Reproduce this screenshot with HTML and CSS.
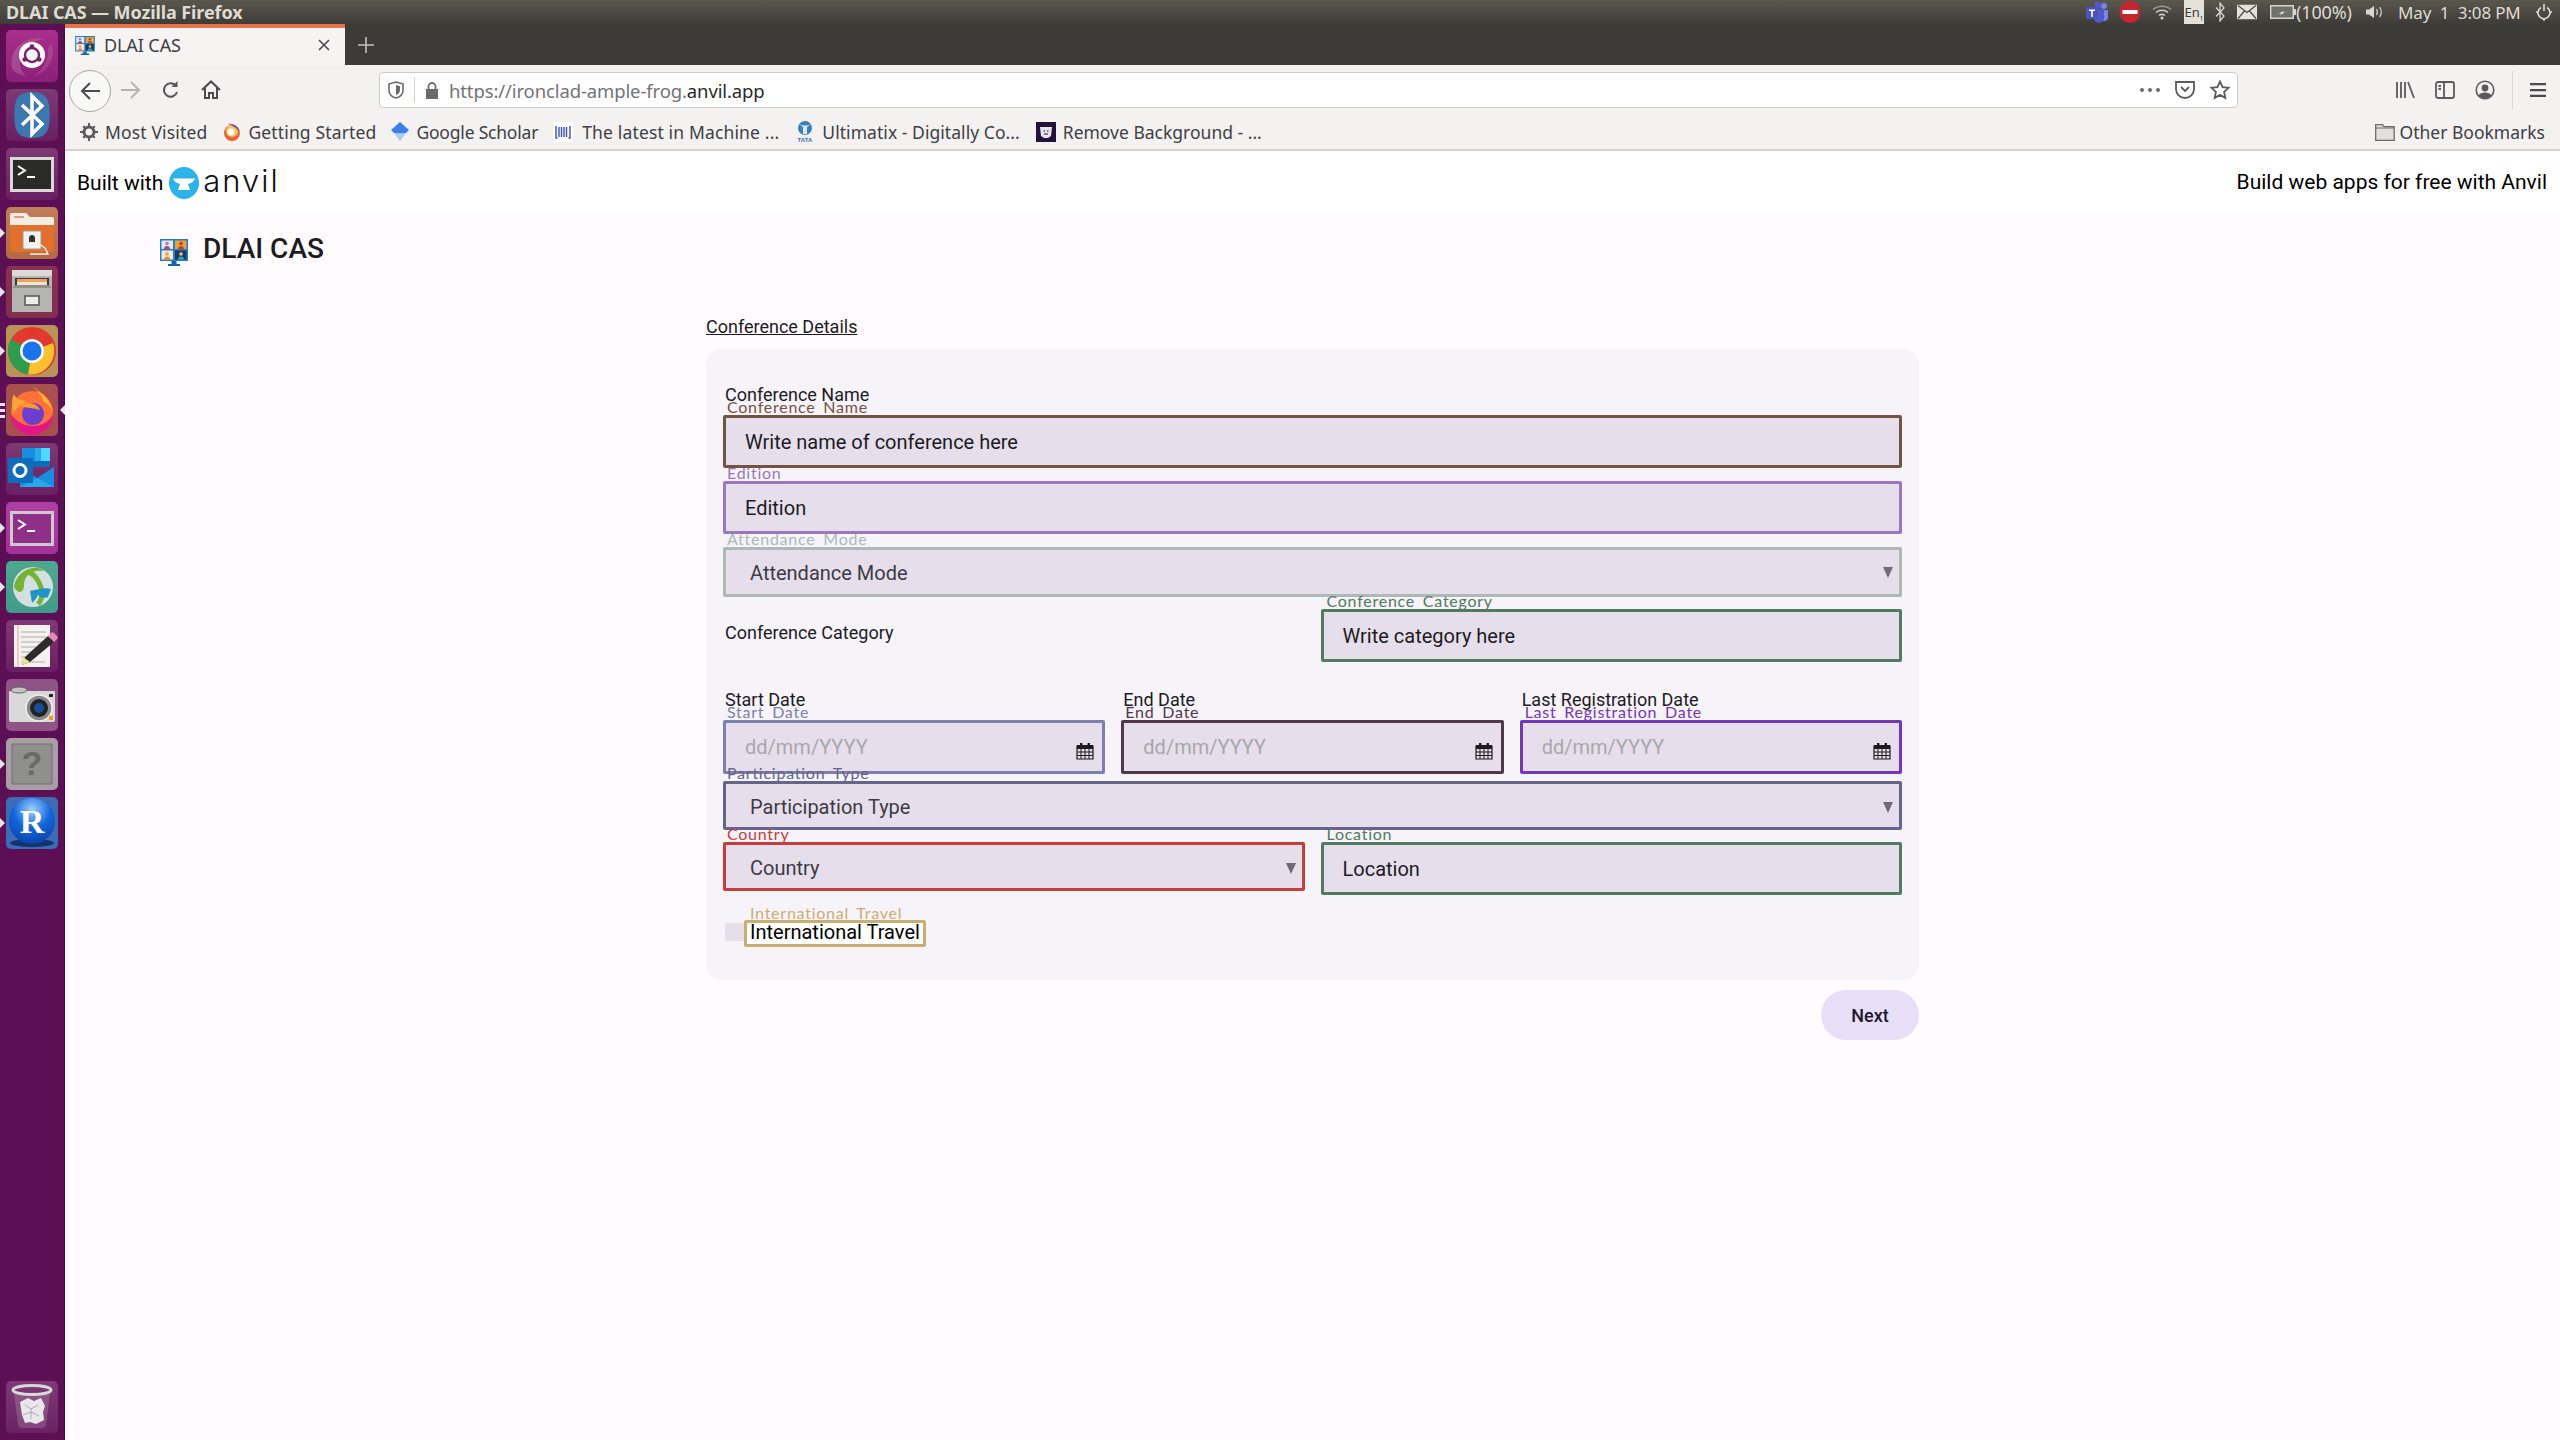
FILE: index.html
```html
<!DOCTYPE html>
<html lang="en">
<head>
<meta charset="utf-8">
<title>DLAI CAS — Mozilla Firefox</title>
<link rel="stylesheet" href="styles.css">
</head>
<body>
<svg class="sprite" width="0" height="0">
  <defs>
    <symbol id="cal" viewBox="0 0 18 18">
      <path d="M1 4h16v13H1z" fill="#e6dfeb" stroke="#1c1b1f" stroke-width="1.2"/>
      <path d="M1 3h16v4H1z" fill="#1c1b1f"/>
      <path d="M4 1h2.4v4H4zM11.6 1H14v4h-2.4z" fill="#1c1b1f"/>
      <path d="M1 10h16M1 13.5h16M5 7v10M9 7v10M13 7v10" stroke="#1c1b1f" stroke-width="1"/>
    </symbol>
    <symbol id="logo" viewBox="0 0 28 27">
      <path d="M0 0h28v22H0z" fill="#1f7fd1"/>
      <path d="M1.5 1.5h11.5v8.5H1.5z" fill="#dbeefb"/>
      <path d="M15 1.5h11.5v8.5H15z" fill="#f0a030"/>
      <path d="M1.5 11.5h11.5v9H1.5z" fill="#fbe8d0"/>
      <path d="M15 11.5h11.5v9H15z" fill="#1d3a5c"/>
      <circle cx="7" cy="4.5" r="1.8" fill="#e0688a"/><path d="M4 10c0-4 6-4 6 0z" fill="#c33a6a"/>
      <circle cx="21" cy="4.5" r="1.8" fill="#b8431f"/><path d="M18 10c0-4 6-4 6 0z" fill="#c4451c"/>
      <circle cx="7" cy="15" r="1.8" fill="#ef9a4a"/><path d="M4 20.5c0-4 6-4 6 0z" fill="#ef7f2a"/>
      <circle cx="21" cy="15" r="1.8" fill="#f0c090"/><path d="M18 20.5c0-4 6-4 6 0z" fill="#2bb3a0"/>
      <path d="M11.500 22h5v3h-5zM8 25h12v2H8z" fill="#1565a8"/>
    </symbol>
    <symbol id="arrow" viewBox="0 0 10 12"><path d="M0 1h10L5 12z" fill="#6f6b74"/></symbol>
  </defs>
</svg>

<header class="panel">
  <span class="panel-title">DLAI CAS — Mozilla Firefox</span>
  <div class="tray">
    <svg class="t-teams" width="24" height="22" viewBox="0 0 24 22"><circle cx="19" cy="5" r="3" fill="#7b83eb"/><circle cx="13" cy="4" r="3.500" fill="#5059c9"/><path d="M14 9h9v7a4 4 0 0 1-4 4h-1a4 4 0 0 1-4-4z" fill="#7b83eb"/><path d="M9 8h10v9a5 5 0 0 1-5 5 5 5 0 0 1-5-5z" fill="#5059c9"/><path d="M1 6h12v12H1z" fill="#4b53bc"/><path d="M4 8.500h6v1.600H7.800V16H6.200v-5.900H4z" fill="#fff"/></svg>
    <svg class="t-red" width="22" height="23" viewBox="0 0 22 23"><ellipse cx="11" cy="11.500" rx="10.500" ry="11" fill="#c6262e"/><path d="M3.500 9.500h15v4H3.500z" fill="#fff"/></svg>
    <svg class="t-wifi" width="20" height="16" viewBox="0 0 20 16" fill="none" stroke="#cfcdc6" stroke-width="1.500"><path d="M1 5.500c5-4.500 13-4.500 18 0" opacity=".6"/><path d="M4 8.500c3.500-3 8.500-3 12 0"/><path d="M7 11.500c2-1.500 4-1.500 6 0"/><circle cx="10" cy="14" r=".8" fill="#cfcdc6"/></svg>
    <span class="t-en">En<sub>1</sub></span>
    <svg class="t-bt" width="10" height="20" viewBox="0 0 10 20" fill="none" stroke="#d8d6cf" stroke-width="1.300"><path d="M1 5.500l8 8.500-4 5V1l4 5-8 8.500"/></svg>
    <svg class="t-mail" width="20" height="15" viewBox="0 0 20 15"><path d="M0 0h20v15H0z" fill="#e3e1da"/><path d="M1 1l9 7 9-7M1 14l6.500-7.500M19 14l-6.500-7.500" fill="none" stroke="#4a4843" stroke-width="1.200"/></svg>
    <svg class="t-batt" width="26" height="14" viewBox="0 0 26 14"><path d="M.7.700h22.600v12.600H.7z" fill="#716f69" stroke="#d8d6cf" stroke-width="1.400"/><path d="M23.500 4H26v6h-2.500z" fill="#d8d6cf"/><path d="M7 9l7-3-1 2 5-2-8 4 1-2z" fill="#e8e6df"/></svg>
    <span class="t-pct">(100%)</span>
    <svg class="t-vol" width="20" height="16" viewBox="0 0 20 16"><path d="M1 5.500h3L9 2v12L4 10.500H1z" fill="#d8d6cf"/><path d="M11.500 5c1.200 2 1.200 4 0 6M14.500 3c2.200 3 2.200 7 0 10" fill="none" stroke="#d8d6cf" stroke-width="1.200"/></svg>
    <span class="t-date">May&nbsp; 1&nbsp; 3:08 PM</span>
    <svg class="t-pow" width="16" height="18" viewBox="0 0 16 18" fill="none" stroke="#dedcd5" stroke-width="1.600"><path d="M5 4.500a6 6 0 1 0 6 0M8 1v7"/><path d="M0 9h2M14 9h2M8 16v2" stroke-width="1.400"/></svg>
  </div>
</header>

<div class="desktop">
  <aside class="launcher">
    <div class="tile t-dash">
      <svg viewBox="0 0 52 52"><path d="M6 38C2 18 22 4 40 10c-14-2-26 8-26 22 0 6 2 10 6 14-6-1-12-3-14-8z" fill="#fff" opacity=".16"/><path d="M46 14c4 14-4 28-18 32 8-6 14-14 14-24 0-3 0-6 4-8z" fill="#fff" opacity=".12"/><circle cx="26" cy="25" r="13" fill="#fff"/><circle cx="26" cy="25" r="7" fill="none" stroke="#7d1f6a" stroke-width="2.400"/><circle cx="26" cy="16.500" r="2.300" fill="#7d1f6a"/><circle cx="18.700" cy="29.500" r="2.300" fill="#7d1f6a"/><circle cx="33.300" cy="29.500" r="2.300" fill="#7d1f6a"/></svg>
    </div>
    <div class="tile t-dim">
      <svg viewBox="0 0 52 52"><path d="M26 3c10 0 16 4 17 13 1 6 1 14 0 20-1 9-7 13-17 13S10 45 9 36c-1-6-1-14 0-20C10 7 16 3 26 3z" fill="#3a78ad"/><path d="M16 16l20 19-10 10V7l10 10-20 19" fill="none" stroke="#fff" stroke-width="3.500"/></svg>
    </div>
    <div class="tile t-dim">
      <svg viewBox="0 0 52 52"><path d="M4 9h44v35H4z" fill="#d8d8d4"/><path d="M7 12h38v29H7z" fill="#2a2a28"/><path d="M12 18l7 4.500-7 4.500" fill="none" stroke="#fff" stroke-width="2"/><path d="M21 28h8v2h-8z" fill="#fff"/></svg>
    </div>
    <div class="tile t-orange run">
      <svg viewBox="0 0 52 52"><path d="M4 8a2 2 0 0 1 2-2h14l4 4h22a2 2 0 0 1 2 2v6H4z" fill="#f1ece4"/><path d="M8 9h10v2H8z" fill="#e89a6a"/><path d="M4 18h44v24a3 3 0 0 1-3 3H7a3 3 0 0 1-3-3z" fill="#e2702c"/><path d="M17 24h18v18H17z" fill="#f5f4f0" stroke="#9a9a96"/><path d="M23 31c0-4 6-4 6 0v4h-6z" fill="#333"/><path d="M33 37l6 4 3 6-18 0" fill="none" stroke="#f0f0ec" stroke-width="1.500"/></svg>
    </div>
    <div class="tile t-wine run">
      <svg viewBox="0 0 52 52"><path d="M6 4h40v6l-4 2H10l-4-2z" fill="#d9d9d6"/><path d="M6 10h40v36H6z" fill="#b4b4b0"/><path d="M9 12h34v10H9z" fill="#3a3a38"/><path d="M11 13h30v3H11z" fill="#f0a060"/><path d="M11 16h30v3H11z" fill="#f3e4c9"/><path d="M6 22l4-3h32l4 3z" fill="#8e8e8a"/><path d="M19 30h14v9H19z" fill="#eee" stroke="#555" stroke-width="1.500"/></svg>
    </div>
    <div class="tile t-tan run">
      <svg viewBox="0 0 52 52"><circle cx="26" cy="26" r="24" fill="#e0392f"/><path d="M26 26L5 14A24 24 0 0 0 22 49.500z" fill="#2f9e4c"/><path d="M26 26l21-8A24 24 0 0 1 22 49.500z" fill="#fbc02d"/><circle cx="26" cy="26" r="12" fill="#fff"/><circle cx="26" cy="26" r="9.500" fill="#1a73e8"/></svg>
    </div>
    <div class="tile t-fox multi">
      <svg viewBox="0 0 52 52"><circle cx="26" cy="28" r="21" fill="#ff7139"/><path d="M5 30a21 21 0 0 0 42 0c-6 14-30 18-42 0z" fill="#e31587"/><path d="M26 2c8 6 18 12 21 26-2-6-6-9-10-11 0-6-6-10-11-15z" fill="#ffbd2e"/><path d="M8 10c2 6 8 6 14 8-6 2-12 4-14 12-2-6-3-14 0-20z" fill="#ffa436"/><circle cx="27" cy="30" r="11" fill="#6b3fd0"/><path d="M14 22c8-6 18-2 20 4-6-2-14-2-20-4z" fill="#ff9a2a"/></svg>
    </div>
    <div class="tile t-dim">
      <svg viewBox="0 0 52 52"><path d="M16 5h26v13H16z" fill="#1490df"/><path d="M29 5h13v13H29z" fill="#28a8ea"/><path d="M35 5h9v13h-9z" fill="#50d9ff"/><path d="M16 18h28v6H16z" fill="#0f6cbd"/><path d="M14 24l17 11 17-11v20H14z" fill="#1490df"/><path d="M14 44l17-9 17 9z" fill="#28a8ea"/><path d="M2 15h24a1 1 0 0 1 1 1v23a1 1 0 0 1-1 1H2z" fill="#0f6cbd"/><circle cx="14" cy="27.500" r="6" fill="none" stroke="#fff" stroke-width="3"/></svg>
    </div>
    <div class="tile t-magenta run">
      <svg viewBox="0 0 52 52"><path d="M4 9h44v35H4z" fill="#d0c8cc"/><path d="M7 12h38v29H7z" fill="#8e2f88"/><path d="M12 18l7 4.500-7 4.500" fill="none" stroke="#fff" stroke-width="2"/><path d="M21 28h8v2h-8z" fill="#fff"/></svg>
    </div>
    <div class="tile t-teal run">
      <svg viewBox="0 0 52 52"><circle cx="27" cy="26" r="20" fill="#d4dfe0"/><path d="M8 26C10 10 30 2 38 10c-14-2-20 6-20 14 0 8-6 10-10 2z" fill="#74b334"/><path d="M22 11c8 2 14 14 14 22 0 4-2 8-4 10" fill="none" stroke="#74b334" stroke-width="5"/><path d="M24 30c8-2 16-4 21-2l-3 8c-4 2-8 0-10-2-2 4-4 6-6 8z" fill="#1f94c9"/></svg>
    </div>
    <div class="tile t-dim">
      <svg viewBox="0 0 52 52"><path d="M8 5h36v42H8z" fill="#f4f2ee"/><path d="M12 5v42" stroke="#e6a0a0"/><path d="M15 12h25M15 17h25M15 22h25M15 27h15M15 32h12M15 37h12M15 42h24" stroke="#999" stroke-width=".8"/><path d="M42 16l6 6-24 20-8 3 3-8z" fill="#2b2b2b"/><path d="M42 16l3-3a2 2 0 0 1 3 0l3 3a2 2 0 0 1 0 3l-3 3z" fill="#e887b0"/><path d="M16 45l1-8 7 5z" fill="#f0e28a"/></svg>
    </div>
    <div class="tile t-cam">
      <svg viewBox="0 0 52 52"><path d="M4 12h44a1 1 0 0 1 1 1v28a2 2 0 0 1-2 2H5a2 2 0 0 1-2-2V13a1 1 0 0 1 1-1z" fill="#d8d8d8"/><ellipse cx="13" cy="11" rx="8" ry="3" fill="#c4c4c4" stroke="#666"/><circle cx="33" cy="29" r="13" fill="#888" stroke="#eee" stroke-width="1.500"/><circle cx="33" cy="29" r="9" fill="#222"/><circle cx="33" cy="29" r="5" fill="#1a4c9c"/><path d="M43 37h4v4h-4z" fill="#f09a20"/><path d="M43 15h4v3h-4z" fill="#222"/></svg>
    </div>
    <div class="tile t-help run">
      <svg viewBox="0 0 52 52"><path d="M6 6h40v40H6z" fill="#8f8f8d" stroke="#6e6e6c"/><text x="26" y="37" text-anchor="middle" class="svg-q">?</text></svg>
    </div>
    <div class="tile t-blue run">
      <svg viewBox="0 0 52 52"><defs><radialGradient id="rb" cx=".5" cy=".25" r=".8"><stop offset="0" stop-color="#9fd0ff"/><stop offset=".5" stop-color="#1466dc"/><stop offset="1" stop-color="#0a3fa8"/></radialGradient></defs><ellipse cx="26" cy="46" rx="22" ry="4" fill="#16346c"/><circle cx="26" cy="24" r="23" fill="url(#rb)"/><text x="26" y="36" text-anchor="middle" class="svg-r">R</text></svg>
    </div>
    <div class="tile t-trash">
      <svg viewBox="0 0 52 52"><path d="M8 12l4 32a5 5 0 0 0 5 3h18a5 5 0 0 0 5-3l4-32z" fill="#fff" opacity=".16"/><ellipse cx="26" cy="9" rx="19" ry="4.500" fill="none" stroke="#d8d8d8" stroke-width="3"/><path d="M14 21l8-4 6 3 7-3 4 8-2 6 1 8-8 4-6-2-5 1-3-8z" fill="#e8e8e8"/><path d="M19 24l6 4 7-4M17 34l8-3 8 4M25 28v10" fill="none" stroke="#b0a8b0"/></svg>
    </div>
  </aside>

  <main class="window">
    <div class="tabstrip">
      <div class="tab">
        <svg class="tab-icon" width="20" height="19"><use href="#logo"/></svg>
        <span class="tab-label">DLAI CAS</span>
        <svg class="tab-close" width="12" height="12" viewBox="0 0 12 12"><path d="M1 1l10 10M11 1L1 11" stroke="#4a4a4f" stroke-width="1.600"/></svg>
      </div>
      <svg class="newtab" width="16" height="16" viewBox="0 0 16 16"><path d="M8 0v16M0 8h16" stroke="#c4c2bb" stroke-width="1.600"/></svg>
    </div>

    <div class="toolbar">
      <div class="nav">
        <span class="back"><svg width="20" height="18" viewBox="0 0 20 18" fill="none" stroke="#4a4a4f" stroke-width="2"><path d="M10 1L2 9l8 8M2 9h18"/></svg></span>
        <svg class="fwd" width="20" height="18" viewBox="0 0 20 18" fill="none" stroke="#b4b4b6" stroke-width="2"><path d="M10 1l8 8-8 8M18 9H0"/></svg>
        <svg class="rel" width="18" height="18" viewBox="0 0 18 18" fill="none" stroke="#55555a" stroke-width="2"><path d="M15 11a6.700 6.700 0 1 1-1-6"/><path d="M15.500 0v6h-6" fill="#55555a" stroke="none"/></svg>
        <svg class="home" width="20" height="19" viewBox="0 0 20 19" fill="none" stroke="#4a4a4f" stroke-width="2"><path d="M1 10l9-8.500L19 10M4 8v10h4v-5h4v5h4V8"/></svg>
      </div>
      <div class="urlbar">
        <svg class="shield" width="16" height="18" viewBox="0 0 16 18"><path d="M8 1l7 2v6c0 4-3 7-7 8-4-1-7-4-7-8V3z" fill="none" stroke="#6a6a6e" stroke-width="1.600"/><path d="M8 4l4 1.200V9c0 2.500-2 4.300-4 5z" fill="#6a6a6e"/></svg>
        <span class="url-sep"></span>
        <svg class="lock" width="14" height="17" viewBox="0 0 14 17"><path d="M1 7h12v10H1z" fill="#6a6a6e"/><path d="M3.500 7V4.500a3.500 3.500 0 0 1 7 0V7" fill="none" stroke="#6a6a6e" stroke-width="1.800"/></svg>
        <span class="url"><span class="url-dim">https://ironclad-ample-frog.</span>anvil.app</span>
        <span class="url-actions">
          <svg width="20" height="4" viewBox="0 0 20 4"><circle cx="2" cy="2" r="2" fill="#6a6a6e"/><circle cx="10" cy="2" r="2" fill="#6a6a6e"/><circle cx="18" cy="2" r="2" fill="#6a6a6e"/></svg>
          <svg width="20" height="18" viewBox="0 0 20 18" fill="none" stroke="#5a5a5e" stroke-width="1.800"><path d="M1 1h18v7a9 9 0 0 1-18 0z"/><path d="M6 6l4 4 4-4"/></svg>
          <svg width="20" height="20" viewBox="0 0 20 20" fill="none" stroke="#5a5a5e" stroke-width="1.800"><path d="M10 1.500l2.600 5.600 6 .7-4.500 4.100 1.200 6-5.300-3-5.300 3 1.200-6L1.400 7.800l6-.7z"/></svg>
        </span>
      </div>
      <div class="tools">
        <svg width="20" height="18" viewBox="0 0 20 18" fill="none" stroke="#5a5a5e" stroke-width="1.800"><path d="M2 1v16M6 1v16M10 1v16M13 1l6 16"/></svg>
        <svg width="20" height="18" viewBox="0 0 20 18" fill="none" stroke="#5a5a5e" stroke-width="1.800"><rect x="1" y="1" width="18" height="16" rx="2"/><path d="M9 1v16M3.500 5H6M3.500 8H6" /></svg>
        <svg width="20" height="20" viewBox="0 0 20 20"><circle cx="10" cy="10" r="8.800" fill="none" stroke="#5a5a5e" stroke-width="1.600"/><circle cx="10" cy="8" r="3.400" fill="#5a5a5e"/><path d="M3.500 15.500c2-4 11-4 13 0a9 9 0 0 1-13 0z" fill="#5a5a5e"/></svg>
        <span class="tool-sep"></span>
        <svg width="16" height="14" viewBox="0 0 16 14"><path d="M0 0h16v2.200H0zM0 6h16v2.200H0zM0 11.800h16V14H0z" fill="#4a4a4f"/></svg>
      </div>
    </div>

    <nav class="bookmarks">
      <a class="bm bm-gear"><svg width="18" height="18" viewBox="0 0 18 18"><circle cx="9" cy="9" r="5" fill="none" stroke="#5a5a5e" stroke-width="3"/><path d="M8 0h2v4H8zM8 14h2v4H8zM0 8h4v2H0zM14 8h4v2h-4zM2.500 3.900l1.400-1.400 2.800 2.800-1.400 1.400zM11.300 12.700l1.400-1.400 2.800 2.800-1.400 1.400zM14.100 2.500l1.400 1.400-2.800 2.800-1.400-1.400zM5.300 11.300l1.400 1.400-2.800 2.800-1.400-1.400z" fill="#5a5a5e"/></svg>Most Visited</a>
      <a class="bm bm-fx"><svg width="18" height="18" viewBox="0 0 18 18"><circle cx="9" cy="10" r="8" fill="#f0623a"/><circle cx="9" cy="8" r="6" fill="#f7c948"/><path d="M5 1c6-1 11 3 11 8-2-4-7-7-11-8z" fill="#7b3fc4"/><circle cx="8" cy="9" r="3.500" fill="#fff"/></svg>Getting Started</a>
      <a class="bm bm-gs"><svg width="18" height="20" viewBox="0 0 18 20"><path d="M9 0l9 8-3 3H3L0 8z" fill="#3b7ee8"/><path d="M3 11h12l-6 8z" fill="#a8c9f5"/></svg>Google Scholar</a>
      <a class="bm bm-bar"><svg width="20" height="20" viewBox="0 0 20 20"><path d="M0 0h20v20H0z" fill="#fff"/><path d="M3 4v12h1.500M17 4v12h-1.500M6 5v10M8.500 5v10M11 5v10M13.500 5v10" fill="none" stroke="#3d4fc4" stroke-width="1.400"/></svg>The latest in Machine ...</a>
      <a class="bm bm-tata"><svg width="20" height="22" viewBox="0 0 20 22"><circle cx="10" cy="7" r="7" fill="#3b7fb8"/><path d="M4 3c4 2 8 2 12 0l-4 3v7H8V6z" fill="#d8e8f4"/><text x="10" y="21" text-anchor="middle" class="svg-tata">TATA</text></svg>Ultimatix - Digitally Co...</a>
      <a class="bm bm-rb"><svg width="20" height="20" viewBox="0 0 20 20"><path d="M0 0h20v20H0z" fill="#241238"/><path d="M4 5h12l-1 9-3 2H8l-3-2z" fill="#e9e4ee"/><path d="M7.500 9h1.500M11 9h1.500M8 12h4" stroke="#241238"/></svg>Remove Background - ...</a>
      <a class="bm bm-other"><svg width="20" height="20" viewBox="0 0 20 20"><path d="M.7 2.700h6.500l2 2h10v13.600H.7z" fill="#e2e0da" stroke="#6a6a6e" stroke-width="1.300"/><path d="M1 6h18" stroke="#6a6a6e"/></svg>Other Bookmarks</a>
    </nav>

    <div class="app">
      <div class="built">
        <div class="built-left">
          <span class="built-text">Built with</span>
          <svg class="anvil-mark" width="30" height="32" viewBox="0 0 30 32"><ellipse cx="15" cy="16" rx="15" ry="16" fill="#2bb3ea"/><path d="M4 11.500h22c-1 3.500-5 5-7 5.500l2 6H9l2-6c-3-.5-6-2.500-7-5.500z" fill="#fff"/></svg>
          <span class="anvil-word">anvil</span>
        </div>
        <span class="built-right">Build web apps for free with Anvil</span>
      </div>

      <div class="app-title">
        <svg class="title-icon" width="28" height="27"><use href="#logo"/></svg>
        <span>DLAI CAS</span>
      </div>

      <section class="container">
        <h2 class="section-link">Conference Details</h2>
        <div class="card">
          <div class="plain-label first">Conference Name</div>
          <div class="field tall c-brown"><span class="float">Conference Name</span><span class="val">Write name of conference here</span></div>
          <div class="field tall c-purple gap"><span class="float">Edition</span><span class="val">Edition</span></div>
          <div class="field sel c-sage gap"><span class="float">Attendance Mode</span><span class="val">Attendance Mode</span><svg class="drop" width="10" height="12"><use href="#arrow"/></svg></div>

          <div class="two row-cat">
            <div class="cat-label">Conference Category</div>
            <div class="field tall c-green"><span class="float">Conference Category</span><span class="val">Write category here</span></div>
          </div>

          <div class="three row-date">
            <div>
              <div class="plain-label">Start Date</div>
              <div class="field tall c-slate"><span class="float">Start Date</span><span class="val ph">dd/mm/YYYY</span><svg class="calendar" width="18" height="18"><use href="#cal"/></svg></div>
            </div>
            <div>
              <div class="plain-label">End Date</div>
              <div class="field tall c-plum"><span class="float">End Date</span><span class="val ph">dd/mm/YYYY</span><svg class="calendar" width="18" height="18"><use href="#cal"/></svg></div>
            </div>
            <div>
              <div class="plain-label">Last Registration Date</div>
              <div class="field tall c-violet"><span class="float">Last Registration Date</span><span class="val ph">dd/mm/YYYY</span><svg class="calendar" width="18" height="18"><use href="#cal"/></svg></div>
            </div>
          </div>

          <div class="field sel short c-indigo row-part"><span class="float">Participation Type</span><span class="val">Participation Type</span><svg class="drop" width="10" height="12"><use href="#arrow"/></svg></div>

          <div class="two row-loc">
            <div class="field sel short c-red"><span class="float">Country</span><span class="val">Country</span><svg class="drop" width="10" height="12"><use href="#arrow"/></svg></div>
            <div class="field tall c-green"><span class="float">Location</span><span class="val">Location</span></div>
          </div>

          <div class="check-row">
            <span class="check"></span>
            <span class="check-label"><span class="float gold">International Travel</span>International Travel</span>
          </div>
        </div>
        <div class="actions"><button class="next">Next</button></div>
      </section>
    </div>
  </main>
</div>
</body>
</html>
```

FILE: styles.css
```css
* { box-sizing: border-box; }
html, body { margin: 0; height: 100%; }
body { width: 2560px; height: 1440px; overflow: hidden; display: flex; flex-direction: column; font-family: "Roboto", sans-serif; background: #fffbfe; }
.sprite { position: absolute; }

/* Ubuntu top panel */
.panel { height: 24px; flex: none; display: flex; align-items: center; justify-content: space-between; background: linear-gradient(#5a574d, #3e3c38); color: #dfdbd2; font-family: "Noto Sans", sans-serif; padding-left: 6px; }
.panel-title { font-size: 18px; font-weight: 700; white-space: nowrap; letter-spacing: -.1px; }
.tray { position: relative; width: 480px; height: 24px; font-size: 18px; letter-spacing: -.15px; }
.tray > * { position: absolute; top: 50%; transform: translateY(-50%); white-space: nowrap; }
.t-teams { left: 5px; } .t-red { left: 39px; } .t-wifi { left: 72px; }
.t-en { left: 104px; width: 20px; height: 24px; background: #e4e1d8; color: #3c3b37; font-size: 13px; line-height: 24px; text-align: center; }
.t-en sub { font-size: 7px; }
.t-bt { left: 135px; } .t-mail { left: 157px; } .t-batt { left: 190px; }
.t-pct { left: 216px; } .t-vol { left: 285px; } .t-date { left: 318px; font-size: 17px; } .t-pow { left: 456px; }

.desktop { flex: 1; display: flex; min-height: 0; }
.launcher { width: 65px; flex: none; background: #5c0f54; border-right: 1px solid #4a0c44; display: flex; flex-direction: column; gap: 7px; padding: 6px 0 7px 6px; }
.tile { width: 52px; height: 52px; border-radius: 5px; position: relative; flex: none; }
.tile svg { width: 52px; height: 52px; display: block; }
.t-dash { background: linear-gradient(#a8308a, #8d1f78); }
.t-dim { background: linear-gradient(#7c3a74, #6a1f62); }
.t-orange { background: linear-gradient(#bf7d5a, #b4693f); }
.t-wine { background: linear-gradient(#8b3050, #80304f); }
.t-tan { background: #b99459; }
.t-fox { background: #a8504e; }
.t-magenta { background: linear-gradient(#b040a4, #a3319a); }
.t-teal { background: linear-gradient(#4ea78f, #3f9c8a); }
.t-cam { background: #8d5485; }
.t-help { background: #a99ea6; }
.t-blue { background: #3b6cb4; }
.t-trash { margin-top: auto; background: linear-gradient(#7d3a76, #6b2263); }
.svg-q { font: 700 34px "Liberation Sans", sans-serif; fill: #6a6a68; }
.svg-r { font: 700 34px "Liberation Serif", serif; fill: #fff; }
.svg-tata { font: 700 6px "Liberation Sans", sans-serif; fill: #3b6fa8; }
.run::before { content: ""; position: absolute; left: -6px; top: 21px; border: 5px solid transparent; border-left-color: #e8e4e6; border-right: 0; }
.multi::before { content: ""; position: absolute; left: -6px; top: 19px; width: 5px; height: 3px; background: #e8e4e6; box-shadow: 0 6px 0 #e8e4e6, 0 12px 0 #e8e4e6; }
.multi::after { content: ""; position: absolute; right: -7px; top: 21px; border: 5px solid transparent; border-right-color: #e8e4e6; border-left: 0; }

/* Firefox window */
.window { flex: 1; min-width: 0; display: flex; flex-direction: column; }
.tabstrip { height: 41px; flex: none; background: #3d3b37; display: flex; align-items: center; font-family: "Noto Sans", sans-serif; }
.tab { width: 280px; height: 41px; background: #f5f4f2; border-top: 4px solid #e9744b; display: flex; align-items: center; padding: 0 15px 3px 10px; color: #3e3e44; font-size: 18px; letter-spacing: -.1px; }
.tab-icon { margin-right: 9px; }
.tab-label { flex: 1; }
.newtab { margin-left: 13px; }

.toolbar { height: 43px; flex: none; background: #f3f2f0; display: flex; align-items: center; position: relative; }
.nav { width: 314px; flex: none; display: flex; align-items: center; padding-left: 4px; }
.back { width: 42px; height: 42px; margin-top: 8px; border-radius: 50%; border: 1px solid #a8a8a6; background: #f8f8f7; display: flex; align-items: center; justify-content: center; flex: none; }
.fwd { margin: 6px 0 0 10px; }
.rel { margin: 6px 0 0 21px; }
.home { margin: 6px 0 0 21px; }
.urlbar { width: 1859px; height: 36px; margin-top: 7px; flex: none; background: #fff; border: 1px solid #cdccc9; border-radius: 4px; display: flex; align-items: center; padding-left: 8px; font-family: "Noto Sans", sans-serif; font-size: 18.500px; color: #2a2a2e; }
.url-sep { width: 1px; height: 26px; background: #d4d3d0; margin: 0 10px 0 10px; }
.lock { margin-right: 10px; }
.url { flex: 1; white-space: nowrap; letter-spacing: -.12px; }
.url-dim { color: #737378; }
.url-actions { display: flex; align-items: center; gap: 15px; padding-right: 7px; }
.tools { flex: 1; display: flex; align-items: center; gap: 20px; padding: 7px 0 0 157px; }
.tool-sep { width: 1px; height: 38px; background: #d8d7d4; margin: 0 -3px; }

.bookmarks { height: 43px; flex: none; background: #f3f2f0; border-bottom: 2px solid #d3d1cc; display: flex; align-items: center; font-family: "Noto Sans", sans-serif; font-size: 17.500px; color: #3e3e44; padding: 6px 0 0 15px; }
.bm { display: flex; align-items: center; gap: 7px; white-space: nowrap; letter-spacing: .15px; margin-right: 16px; }
.bm-fx { margin-right: 15px; }
.bm-gs { letter-spacing: -.2px; margin-right: 15px; }
.bm-bar { gap: 9px; }
.bm-tata { letter-spacing: .05px; }
.bm-rb { letter-spacing: 0; }
.bm-other { margin: 0 15px 0 auto; gap: 5px; letter-spacing: 0; }

/* Anvil app */
.app { flex: 1; background: #fffbfe; min-height: 0; }
.built { height: 62px; background: #fff; display: flex; align-items: center; justify-content: space-between; padding: 0 13px 0 12px; font-size: 21px; color: #000; }
.built-left { display: flex; align-items: center; }
.built-text { margin-top: 2px; }
.anvil-mark { margin: 1px 4px 0 6px; }
.anvil-word { font-family: "Inter", sans-serif; font-size: 31px; font-weight: 300; letter-spacing: 2px; color: #111; margin-top: -3px; line-height: 1; }
.app-title { display: flex; align-items: center; gap: 15px; padding: 21px 0 0 95px; font-size: 28px; font-weight: 500; color: #1c1b1f; height: 50px; }
.title-icon { margin-top: 7px; }
.container { width: 1213px; margin: 0 auto; }
.section-link { margin: 0; padding-top: 53px; height: 86px; font-size: 18px; font-weight: 400; line-height: 22px; text-decoration: underline; color: #1c1b1f; }
.card { background: #f6f3f9; border-radius: 16px; padding: 33px 17px 32px; height: 631px; }
.plain-label { font-size: 18px; line-height: 22px; color: #1c1b1f; height: 33px; padding: 2px 0 0 2px; }
.three .plain-label { height: 34px; padding-top: 3px; }
.field { position: relative; display: flex; align-items: center; background: #e6dfeb; border: 3px solid; border-radius: 2px; font-size: 20px; color: #1c1b1f; }
.tall { height: 53px; padding-left: 19px; }
.sel { height: 50px; padding: 2px 0 0 24px; color: #3d3a45; }
.short { height: 49px; }
.gap { margin-top: 13px; }
.float { position: absolute; left: 1px; top: -19px; font-family: "Lato", sans-serif; font-size: 16px; font-weight: 400; line-height: 16px; word-spacing: 3px; letter-spacing: .75px; white-space: nowrap; }
.val { white-space: nowrap; }
.ph { color: #a9a6ad; }
.drop { position: absolute; right: 6px; top: 16px; }
.short .drop { top: 17px; }
.calendar { position: absolute; right: 8px; top: 19px; }
.two { display: grid; grid-template-columns: 1fr 1fr; column-gap: 16px; align-items: start; }
.three { display: grid; grid-template-columns: repeat(3, 1fr); column-gap: 16px; }
.row-cat { margin-top: 12px; }
.cat-label { font-size: 18px; line-height: 48px; padding-left: 2px; color: #1c1b1f; }
.row-date { margin-top: 24px; }
.three .tall { height: 54px; }
.row-part { margin-top: 7px; }
.row-loc { margin-top: 12px; }
.check-row { display: flex; align-items: center; margin-top: 25px; padding-left: 2px; }
.check { width: 20px; height: 18px; background: #e6dfeb; margin-top: -3px; }
.check-label { position: relative; height: 27px; padding: 0 3px; background: #fff; border: 3px solid #c9ae72; border-radius: 2px; font-size: 20px; line-height: 19px; color: #000; margin-left: -1px; white-space: nowrap; }
.c-brown { border-color: #735341; } .c-brown .float { color: #735341; }
.c-purple { border-color: #9a77bf; } .c-purple .float { color: #9a77bf; }
.c-sage { border-color: #adb9b7; } .c-sage .float { color: #adb9b7; }
.c-green { border-color: #527a5f; } .c-green .float { color: #527a5f; left: 3px; }
.c-slate { border-color: #7d80aa; } .c-slate .float { color: #7d80aa; }
.c-plum { border-color: #503749; } .c-plum .float { color: #503749; }
.c-violet { border-color: #7237bd; } .c-violet .float { color: #7237bd; left: 2px; }
.c-indigo { border-color: #65648a; } .c-indigo .float { color: #65648a; }
.c-red { border-color: #c53d3d; } .c-red .float { color: #c53d3d; }
.gold.float { color: #c9ae72; left: 3px; top: -18px; }
.actions { display: flex; justify-content: flex-end; padding-top: 10px; }
.next { width: 98px; height: 50px; border: 0; border-radius: 25px; background: #e8def8; color: #1d192b; font: 500 18px "Roboto", sans-serif; }
```
